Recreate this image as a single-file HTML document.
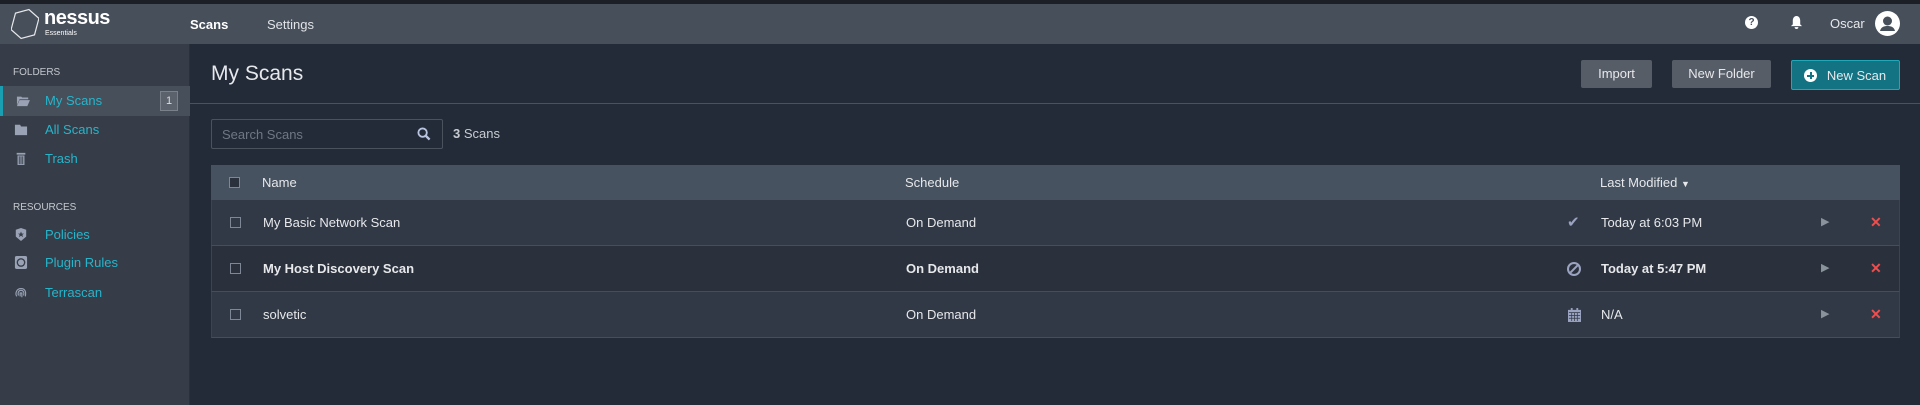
<!DOCTYPE html>
<html><head><meta charset="utf-8"><style>
*{box-sizing:border-box;margin:0;padding:0}
body{width:1920px;height:405px;background:#232b38;font-family:"Liberation Sans",sans-serif;color:#e6e8eb;position:relative;overflow:hidden;font-size:13px}
.abs{position:absolute}
#top{left:0;top:0;width:1920px;height:4px;background:#1c1f25}
#bar{left:0;top:4px;width:1920px;height:40px;background:#474f5a}
#side{left:0;top:44px;width:190px;height:361px;background:#363d48;border-right:1px solid #2a313b}
.lbl{font-size:10px;color:#c4c8ce;left:13px}
.item{left:0;width:190px;height:30px;line-height:30px;color:#26b5cb;font-size:13px;padding-left:45px}
.ico{position:absolute;left:14px;top:8px;width:14px;height:13px}
.btn{top:60px;height:28px;line-height:28px;background:#575d67;border-radius:2px;color:#e6e8eb;text-align:center;font-size:13px}
.row{left:211px;width:1689px;height:46px;border-bottom:1px solid #474e59;border-left:1px solid #3c4450;border-right:1px solid #3c4450}
.row span{position:absolute;top:0;line-height:45px;font-size:13px}
.cb{position:absolute;left:18px;top:17px;width:11px;height:11px;border:1px solid #7e8796}
</style></head><body>
<div id="top" class="abs"></div>
<div id="bar" class="abs">
<svg class="abs" style="left:11px;top:4px" width="28" height="32" viewBox="0 0 28 32"><polygon points="14,1 26,7 26,24 14,31 2,25 2,8" fill="none" stroke="#e6e8eb" stroke-width="1.2" transform="rotate(15 14 16)"/></svg>
<div class="abs" style="left:44px;top:3px;font-size:20px;font-weight:bold;color:#fff;letter-spacing:-0.5px">nessus</div>
<div class="abs" style="left:45px;top:26px;font-size:7px;color:#fff">Essentials</div>
<div class="abs" style="left:190px;top:13px;font-weight:bold;color:#fff">Scans</div>
<div class="abs" style="left:267px;top:13px;color:#e0e3e7">Settings</div>
<div class="abs" style="left:1745px;top:12px;width:13px;height:13px;border-radius:50%;background:#fff;color:#474f5a;font-size:10px;font-weight:bold;text-align:center;line-height:13px">?</div>
<svg class="abs" style="left:1790px;top:11px" width="13" height="14" viewBox="0 0 14 15"><path d="M7 1C4 1 3 4 3 6v4L1 12h12l-2-2V6c0-2-1-5-4-5zM5 13a2 2 0 0 0 4 0z" fill="#fff"/></svg>
<div class="abs" style="left:1830px;top:12px;color:#e6e8eb">Oscar</div>
<svg class="abs" style="left:1875px;top:7px" width="25" height="25" viewBox="0 0 25 25"><circle cx="12.5" cy="12.5" r="12.5" fill="#fff"/><circle cx="12.5" cy="10" r="4.5" fill="#474f5a"/><path d="M5 20c1-4 4-5 7.5-5s6.5 1 7.5 5z" fill="#474f5a"/></svg>
</div>
<div id="side" class="abs">
<div class="abs lbl" style="top:23px">FOLDERS</div>
<div class="abs item" style="top:42px;background:#474f5a;border-left:3px solid #1a9fb2;padding-left:42px"><svg class="ico" style="left:13px" viewBox="0 0 16 15"><path d="M1 3h5l1 1h7v2H4L1 13z M4 7h12l-3 7H1z" fill="#9aa3b5"/></svg>My Scans<div class="abs" style="left:157px;top:5px;width:18px;height:20px;border:1px solid #7a818b;background:#5b626c;line-height:18px;text-align:center;font-size:11px;color:#ddd">1</div></div>
<div class="abs item" style="top:71px"><svg class="ico" viewBox="0 0 16 15"><path d="M1 2h6l1 2h7v10H1z" fill="#9aa3b5"/></svg>All Scans</div>
<div class="abs item" style="top:100px"><svg class="ico" viewBox="0 0 16 15"><path d="M3 1h10v2H3zM4 4h8v11H4z" fill="#9aa3b5"/><path d="M6 5v9M8 5v9M10 5v9" stroke="#363d48"/></svg>Trash</div>
<div class="abs lbl" style="top:158px">RESOURCES</div>
<div class="abs item" style="top:176px"><svg class="ico" viewBox="0 0 16 15"><path d="M8 0l6 2v8l-6 5-6-5V2z" fill="#9aa3b5"/><path d="M8 4l1 2.5h2.5l-2 1.5 1 2.5L8 9l-2.5 1.5 1-2.5-2-1.5H7z" fill="#363d48"/></svg>Policies</div>
<div class="abs item" style="top:204px"><svg class="ico" viewBox="0 0 16 15"><rect x="1" y="0" width="14" height="15" rx="2" fill="#9aa3b5"/><circle cx="8" cy="7.5" r="5" fill="#363d48"/><circle cx="8" cy="7.5" r="3.5" fill="#9aa3b5"/></svg>Plugin Rules</div>
<div class="abs item" style="top:234px"><svg class="ico" viewBox="0 0 16 15"><path d="M3 12C1 8 3 3 8 3s6 4 5 9M5 11c-1-3 0-6 3-6s4 3 3 6M7 12V8h2v5" fill="none" stroke="#9aa3b5" stroke-width="1.3"/></svg>Terrascan</div>
</div>
<div class="abs" style="left:211px;top:62px;font-size:21px;color:#e6e8eb;font-weight:300">My Scans</div>
<div class="abs btn" style="left:1581px;width:71px">Import</div>
<div class="abs btn" style="left:1672px;width:99px">New Folder</div>
<div class="abs btn" style="left:1791px;width:109px;height:30px;line-height:30px;background:#137382;border:1px solid #1ea9bb;padding-left:22px"><div class="abs" style="left:12px;top:8px;width:13px;height:13px;border-radius:50%;background:#fff"><div class="abs" style="left:3px;top:5.5px;width:7px;height:2px;background:#137382"></div><div class="abs" style="left:5.5px;top:3px;width:2px;height:7px;background:#137382"></div></div>New Scan</div>
<div class="abs" style="left:190px;top:103px;width:1730px;height:1px;background:#4a525d"></div>
<div class="abs" style="left:211px;top:119px;width:232px;height:30px;border:1px solid #4a525e;border-radius:2px;background:#232b38"><span class="abs" style="left:10px;top:7px;color:#6f7784;font-size:13px">Search Scans</span><svg class="abs" style="left:205px;top:7px" width="14" height="14" viewBox="0 0 15 15"><circle cx="6" cy="6" r="4.5" fill="none" stroke="#b8c4e0" stroke-width="2"/><path d="M9.5 9.5l4 4" stroke="#b8c4e0" stroke-width="2.5"/></svg></div>
<div class="abs" style="left:453px;top:126px;color:#c8ccd2"><b>3</b> Scans</div>
<div class="abs" style="left:211px;top:165px;width:1689px;height:35px;background:#465260">
<div class="cb" style="top:12px;background:#2b323e"></div>
<span class="abs" style="left:51px;top:10px">Name</span>
<span class="abs" style="left:694px;top:10px">Schedule</span>
<span class="abs" style="left:1389px;top:10px">Last Modified <small style="font-size:9px">▼</small></span>
</div>
<div class="abs row" style="top:200px;background:#323946"><div class="cb"></div><span style="left:51px">My Basic Network Scan</span><span style="left:1355px;color:#9aa3c0;font-size:15px">✔</span><span style="left:694px">On Demand</span><span style="left:1389px">Today at 6:03 PM</span><span style="left:1609px;color:#8a939c;font-size:11px">▶</span><span style="left:1658px;color:#f04d4d;font-weight:bold;font-size:14px">✕</span></div>
<div class="abs row" style="top:246px;background:#2b313c"><div class="cb"></div><span style="left:51px;font-weight:bold">My Host Discovery Scan</span><span style="left:694px;font-weight:bold">On Demand</span><span style="left:1355px;top:16px;width:14px;height:14px;border:2px solid #9aa3c0;border-radius:50%;line-height:0"></span><span style="left:1357px;top:22px;width:10px;height:2px;background:#9aa3c0;transform:rotate(-45deg);line-height:0"></span><span style="left:1389px;font-weight:bold">Today at 5:47 PM</span><span style="left:1609px;color:#8a939c;font-size:11px">▶</span><span style="left:1658px;color:#f04d4d;font-weight:bold;font-size:14px">✕</span></div>
<div class="abs row" style="top:292px;background:#323946"><div class="cb"></div><span style="left:51px">solvetic</span><span style="left:694px">On Demand</span><svg class="abs" style="left:1356px;top:16px" width="13" height="14" viewBox="0 0 14 15"><rect x="0" y="2" width="14" height="13" fill="#9aa3c0"/><rect x="3" y="0" width="2" height="3" fill="#9aa3c0"/><rect x="9" y="0" width="2" height="3" fill="#9aa3c0"/><path d="M1 5h12M1 8h12M1 11h12M4 5v9M7 5v9M10 5v9" stroke="#323946" stroke-width="0.8"/></svg><span style="left:1389px">N/A</span><span style="left:1609px;color:#8a939c;font-size:11px">▶</span><span style="left:1658px;color:#f04d4d;font-weight:bold;font-size:14px">✕</span></div>
</body></html>
